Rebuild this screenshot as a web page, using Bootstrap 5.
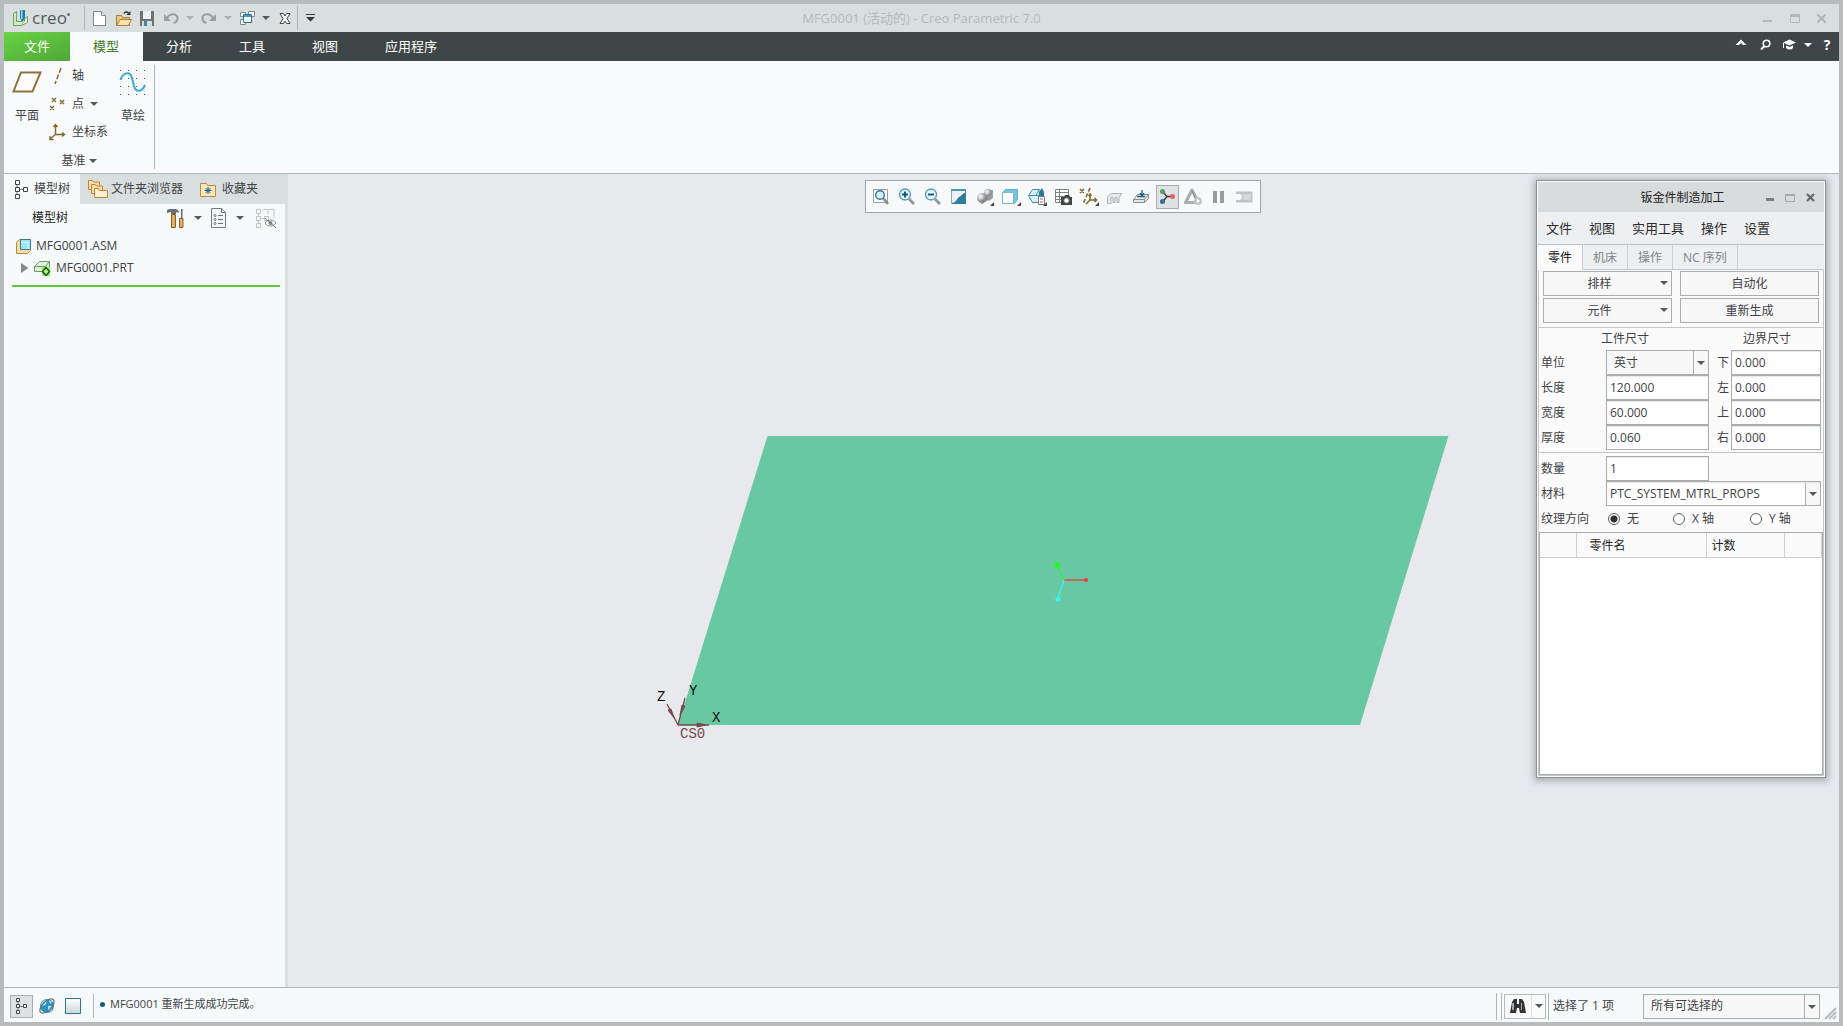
<!DOCTYPE html>
<html lang="zh-CN">
<head>
<meta charset="utf-8">
<meta name="viewport" content="width=device-width, initial-scale=1">
<title>MFG0001 (活动的) - Creo Parametric 7.0</title>
<link href="https://cdn.jsdelivr.net/npm/bootstrap@5.3.0/dist/css/bootstrap.min.css" rel="stylesheet">
<style>
:root{--frame:#b7bbbe;--bar:#d9dfdf;--dark:#3e4647;--pale:#f8fafc;--ink:#404244;--line:#b1b6b9}
body{font-family:"Open Sans","Noto Sans CJK SC",sans-serif;font-size:12px;line-height:16px;color:var(--ink);background:var(--frame)}
button,input,select{font:inherit;color:inherit}
svg{display:block;flex:none}
.app-shell{border:4px solid var(--frame)}
.ghost{border:0;background:none;padding:0;display:flex;align-items:center;justify-content:center}
.tri{width:0;height:0;border:4px solid transparent;border-top-color:#55595c;border-bottom:0;flex:none}
.tri.dim{border-top-color:#acb0b1}
.tri.light{border-top-color:#fff}
.vline{width:1px;background:#b2b6b8;flex:none}
/* title bar */
.titlebar{height:28px;background:var(--bar)}
.brand{width:80px;padding-left:8px;gap:3px}
.brand-name{font-size:17px;line-height:20px;color:#55595b}
.brand-dot{width:3px;height:3px;border-radius:50%;background:#6d7173;margin-bottom:8px}
.quick{margin-left:2px}
.tool{width:24px;height:24px}
.drop{width:14px;height:24px}
.win-title{font-size:13px;color:#b4b9bb}
.win-ctl{width:27px;height:24px}
/* menu tabs */
.menubar{height:29px;background:var(--dark);font-size:13px}
.menubar a{color:#fff;text-decoration:none;display:flex;align-items:center;padding:0 24px 2px 23px}
.menubar a.file-tab{background:linear-gradient(160deg,#66d444,#50a637);padding:0 20px 2px}
.menubar a.current{background:var(--pale);color:#3f7d22}
.help{font-size:14px}
/* ribbon */
.ribbon{height:113px;background:var(--pale);border-bottom:1px solid #b1b9b9}
.ribbon-group{width:150px;padding-top:1px}
.big{flex-direction:column;justify-content:flex-start;gap:14px;padding-top:8px}
.plane-btn{width:38px;margin-left:4px}
.sketch-btn{width:36px;gap:12px;padding-top:7px}
.cmds{width:69px;padding-left:2px}
.cmd{height:28px;justify-content:flex-start;gap:2px}
.group-name{gap:3px;margin-top:7px}
/* left panel */
.side{width:284px;background:#f7fafb;border-right:3px solid var(--bar)}
.side-tabs{height:30px;background:var(--bar)}
.side-tabs button{gap:3px}
.side-tabs .current{background:#f7fafb;width:76px;gap:6px}
.side-tabs .fav{gap:5px;margin-left:16px}
.side-tools{height:27px;padding:1px 4px 0 28px}
.side-tools .drop{width:25px}
.tree-row{height:22px;padding-left:12px;gap:5px}
.tree-row.child{padding-left:17px}
.tree-end{height:2px;background:#61c845;margin:6px 5px 0 8px}
/* viewport */
.view{background:#e8e9ed}
.scene{position:absolute;left:0;top:0}
.viewbar{margin-top:6px;margin-right:2px;height:33px;background:#f8f9fb;border:1px solid #a0a4a7;padding:0 2px}
.viewbar .ghost{width:26px;height:24px}
.viewbar .pressed{width:23px;margin:0 1px 0 2px;background:#dfe1e4;border:1px solid #a9acae}
/* dialog */
.dlg{position:absolute;right:13px;top:6px;width:290px;background:#fbfbfc;border:1px solid #8d9193;box-shadow:0 1px 7px 2px rgba(70,75,80,.4);padding:1px}
.dlg-title{height:30px;background:#d8dcdd;color:#222;padding:1px 4px 0 0}
.dlg-title .caption-text{padding-left:67px}
.dlg-title button{width:20px}
.dlg-menu{height:33px;background:#eeeff1;font-size:13px;padding-left:8px;gap:17px;border-bottom:1px solid #bcc0c3;color:#2a2c2e}
.dlg-tabs{height:25px;background:#eeeff1;border-bottom:1px solid #c3c7ca}
.dlg-tabs button{color:#808487;border-right:1px solid #ced1d4;padding:1px 10px 0}
.dlg-tabs .current{color:#111;background:#fbfbfc;height:25px}
.dlg-body{border:1px solid #c3c7ca;border-top:0}
.push{height:25px;background:#f7f7f8;border:1px solid #a9adaf;padding:0;position:relative}
.push.has-list{padding-right:16px}
.push .tri{position:absolute;right:3px;top:9px}
.push-grid{display:grid;grid-template-columns:129px 139px;gap:2px 8px;padding:1px 0 4px 4px;border-bottom:1px solid #c3c7ca}
.dims{display:grid;grid-template-columns:65px 103px 22px 90px;align-items:center;padding:0 0 2px 2px}
.dims .side-lab{padding-left:8px}
.dims.more{border-top:1px solid #c3c7ca;padding-top:3px;padding-bottom:0}
.heads{height:22px;padding:0 32px 0 62px}
.box,.pick{height:25px;border:1px solid #a9adaf;background:#fff;border-radius:0;padding:0 3px;width:100%;min-width:0;box-shadow:inset 0 1px 1px #e4e6e8}
.pick{appearance:none;padding-right:18px;background:#fff url("data:image/svg+xml,%3Csvg xmlns='http://www.w3.org/2000/svg' width='15' height='23'%3E%3Cpath d='M0 0h15v23H0z' fill='%23f7f7f8'/%3E%3Cpath d='M0 0h1v23H0z' fill='%23a9adaf'/%3E%3Cpath d='M4 10h8l-4 4z' fill='%2355595c'/%3E%3C/svg%3E") no-repeat right 0 top 0}
.pick.gray{background-color:#f7f7f8;padding-left:7px;box-shadow:none}
.pick.span-all{grid-column:2/5}
.pick.filter{width:177px;margin-left:29px}
.grain{height:26px;padding-left:2px}
.grain .lead-in{width:67px}
.grain label{padding-left:7px}
.radio{appearance:none;width:12px;height:12px;border:1px solid #5c6063;border-radius:50%;margin:0;background:#fff}
.radio:checked{background:radial-gradient(circle,#2d3033 3px,#fff 4px)}
.parts{border:1px solid #a9adaf;background:#fff;height:243px}
.parts table{table-layout:fixed;border-collapse:collapse}
.parts th{height:24px;font-weight:400;color:#1e1f20;background:#fafafb;border-right:1px solid #ccd0d2;border-bottom:1px solid #ccd0d2;padding:3px 5px 0}
.parts .part-col{padding-left:13px}
/* status bar */
.status{height:35px;background:#f7fafb;border-top:1px solid #b1b9b9;padding-top:2px}
.toggle{width:23px;height:23px;border:1px solid #a9adaf;background:#dfe1e4;margin-left:6px}
.msg{font-size:11px;gap:5px;padding:0 0 4px 6px}
.bullet{width:5px;height:5px;border-radius:50%;background:#165a7a}
.find{width:42px;height:25px;border:1px solid #b6babc;background:#fafafa}
.h24{height:24px}.h27{height:27px}
</style>
<script src="https://cdn.jsdelivr.net/npm/bootstrap@5.3.0/dist/js/bootstrap.bundle.min.js"></script>
</head>
<body>
<div class="app-shell vh-100 d-flex flex-column overflow-hidden">

<header class="titlebar d-flex align-items-center position-relative">
  <div class="brand d-flex align-items-center">
    <svg width="17" height="17" viewBox="0 0 17 17"><path d="M1.500 3.500 4.500 1.500V11.500H9.500V8.500L12.500 6.500V11.500L9.500 15.500H1.500Z" fill="#c9efb9" stroke="#6f9f68"/><path d="M9.500 15.500 15.500 12.500V6.500L12.500 8.500V11.500" fill="#e2f7da" stroke="#6f9f68"/><path d="M8 0h5v8l-2.500 4L8 8z" fill="#1c7ba5"/><path d="M9 0h1.500v9H9z" fill="#9bd7ee"/></svg>
    <span class="d-flex align-items-center"><span class="brand-name">creo</span><i class="brand-dot"></i></span>
  </div>
  <span class="vline h24"></span>
  <div class="d-flex quick">
    <button class="ghost tool" aria-label="新建"><svg width="16" height="17"><path d="M2.500 1.500h8l4 4v10h-12z" fill="#fff" stroke="#85898b"/><path d="M10.500 1.500v4h4" fill="#e6eaec" stroke="#85898b"/></svg></button>
    <button class="ghost tool" aria-label="打开"><svg width="17" height="17"><path d="M1.500 15.500v-10h5l1 2h7v8z" fill="#eec77b" stroke="#a87b38"/><path d="M1.500 15.500 5 9.500h11.500l-3 6z" fill="#fce1ad" stroke="#a87b38"/><path d="M9 3.500c1-2 3-2 4.500-.5" fill="none" stroke="#333" stroke-width="1.600"/><path d="M11.500 5h4V1z" fill="#333"/></svg></button>
    <button class="ghost tool" aria-label="保存"><svg width="16" height="17"><path d="M1 1h14v15H1z" fill="#6d7275"/><path d="M4 1h8v8H4z" fill="#eef1f2"/><path d="M3 11h10v5H3z" fill="#d7dcde"/><path d="M5 11h3v5H5z" fill="#3a87a6"/></svg></button>
    <button class="ghost tool" aria-label="撤消"><svg width="16" height="14"><path d="M1 3v7h7z" fill="#9b9fa1"/><path d="M4 7C7 2 14 2 14.500 7c0 3-2 4.500-4 5" fill="none" stroke="#9b9fa1" stroke-width="2.200"/></svg></button>
    <button class="ghost drop" aria-label="撤消列表"><i class="tri dim"></i></button>
    <button class="ghost tool" aria-label="重做"><svg width="16" height="14"><path d="M15 3v7H8z" fill="#9b9fa1"/><path d="M12 7C9 2 2 2 1.500 7c0 3 2 4.500 4 5" fill="none" stroke="#9b9fa1" stroke-width="2.200"/></svg></button>
    <button class="ghost drop" aria-label="重做列表"><i class="tri dim"></i></button>
    <button class="ghost tool" aria-label="窗口"><svg width="16" height="16"><g fill="#fff" stroke="#80868a"><path d="M1.500 2.500h5v4h-5zM9.500 1.500h6v5h-6zM1.500 9.500h5v5h-5z"/><path d="M4.500 4.500h8v8h-8z" stroke="#2b7391"/></g><path d="M5 5h7v2H5z" fill="#38a3c8"/></svg></button>
    <button class="ghost drop" aria-label="窗口列表"><i class="tri"></i></button>
    <button class="ghost tool" aria-label="关闭窗口"><svg width="12" height="11"><path d="M1 .500h3.500L6 3 7.500.500H11L8 5.500l3 5H7.500L6 8l-1.500 2.500H1l3-5z" fill="#fff" stroke="#424648"/></svg></button>
  </div>
  <span class="vline h24"></span>
  <button class="ghost tool" aria-label="自定义快速访问工具栏"><svg width="9" height="8"><path d="M0 0h9v1H0zM0 3h9L4.500 7.500z" fill="#35393b"/></svg></button>
  <div class="win-title position-absolute start-50 translate-middle-x">MFG0001 (活动的) - Creo Parametric 7.0</div>
  <div class="ms-auto d-flex pe-1">
    <button class="ghost win-ctl" aria-label="最小化"><svg width="9" height="10"><path d="M0 7h9v2H0z" fill="#b3b7b9"/></svg></button>
    <button class="ghost win-ctl" aria-label="最大化"><svg width="10" height="9"><path d="M.500 1h9v7.500h-9z" fill="none" stroke="#b3b7b9"/><path d="M0 0h10v3H0z" fill="#b3b7b9"/></svg></button>
    <button class="ghost win-ctl" aria-label="关闭"><svg width="9" height="9"><path d="m.500.500 8 8m0-8-8 8" stroke="#aeb2b4" stroke-width="2"/></svg></button>
  </div>
</header>

<nav class="menubar d-flex">
  <a class="file-tab" href="#">文件</a><a class="current" href="#">模型</a><a href="#">分析</a><a href="#">工具</a><a href="#">视图</a><a href="#">应用程序</a>
  <div class="ms-auto d-flex align-items-center pb-1">
    <button class="ghost tool pb-1" aria-label="最小化功能区"><svg width="12" height="7"><path d="m.500 6L6 .500 11.500 6H8L6 4 4 6z" fill="#fff"/></svg></button>
    <button class="ghost tool" aria-label="搜索"><svg width="11" height="11"><circle cx="6.500" cy="4.500" r="3.300" fill="none" stroke="#fff" stroke-width="1.600"/><path d="M4.500 7 1 10.500" stroke="#fff" stroke-width="2"/></svg></button>
    <button class="ghost tool" aria-label="学习"><svg width="13" height="11"><path d="m0 3.500 6.500-3 6.500 3-6.500 3z" fill="#fff"/><path d="M3 6.500v2.500q3.500 3 7 0V6.500L6.500 8zM0 4h1v5H0z" fill="#fff"/></svg></button>
    <button class="ghost drop" aria-label="学习列表"><i class="tri light"></i></button>
    <button class="ghost tool help text-white fw-bold" aria-label="帮助">?</button>
  </div>
</nav>

<section class="ribbon d-flex">
  <div class="ribbon-group d-flex flex-column">
    <div class="d-flex">
      <button class="ghost big plane-btn"><svg width="30" height="24"><path d="M9 2.500h19.500L20.500 21.500H1.500z" fill="#fdfcfa" stroke="#8d733d" stroke-width="2"/></svg>平面</button>
      <div class="cmds">
        <button class="ghost cmd"><svg width="18" height="18"><path d="m13 1-6 16" stroke="#84692f" stroke-width="1.500" stroke-dasharray="5 2"/></svg><span class="ps-1">轴</span></button>
        <button class="ghost cmd"><svg width="18" height="16"><path d="m4 2 4 4m0-4-4 4m8-2 4 4m0-4-4 4M2 10l4 4m0-4-4 4" stroke="#84692f" stroke-width="1.400"/></svg><span class="ps-1">点</span><i class="tri ms-1"></i></button>
        <button class="ghost cmd"><svg width="18" height="18"><path d="M7.500 2v9.500H16M7.500 11.500 2 16M5.500 4l2-2.500 2 2.500M14 9.500l2.500 2-2.500 2M2 13v3.500h3.500" fill="none" stroke="#84692f" stroke-width="1.400"/></svg><span class="ps-1 text-nowrap">坐标系</span></button>
      </div>
      <button class="ghost big sketch-btn"><svg width="28" height="27"><g fill="#4c5052"><path d="M1 1h1v1H1zM9 1h1v1H9zM17 1h1v1h-1zM25 1h1v1h-1zM1 9h1v1H1zM9 9h1v1H9zM17 9h1v1h-1zM25 9h1v1h-1zM1 17h1v1H1zM9 17h1v1H9zM17 17h1v1h-1zM25 17h1v1h-1zM1 25h1v1H1zM9 25h1v1H9zM17 25h1v1h-1zM25 25h1v1h-1z"/></g><path d="M1.500 11C4 3 11 2 13 9l2 8c2 7 8 6 11-1" fill="none" stroke="#3ba7d6" stroke-width="2"/></svg>草绘</button>
    </div>
    <button class="ghost group-name mx-auto">基准<i class="tri"></i></button>
  </div>
  <span class="vline my-1"></span>
</section>

<main class="d-flex flex-grow-1" style="min-height:0">
  <aside class="side flex-shrink-0">
    <div class="side-tabs d-flex">
      <button class="ghost current"><svg width="14" height="19"><g fill="#fff" stroke="#404446"><path d="M3 5v9M3 9.500h7" stroke="#777"/><path d="M1.500.500h4v4h-4zM1.500 7.500h4v4h-4zM1.500 14.500h4v4h-4zM9.500 7.500h4v4h-4z"/></g></svg>模型树</button>
      <button class="ghost ms-2"><svg width="20" height="20"><g stroke="#b9843b" fill="#fbdda4"><path d="M.500 10.500v-9h4l1 1.500h6v7.500z"/><path d="M3.500 14.500v-9h4l1 1.500h6v7.500z"/><path d="M6.500 18.500v-9h4l1 2h8v7z" fill="#fff0cf"/></g></svg>文件夹浏览器</button>
      <button class="ghost fav"><svg width="18" height="17"><path d="M1.500 15.500V2.500h6l1 2h8v11z" fill="#fce7bd" stroke="#b58a49"/><path d="M9 6v7M5.500 9.500h7M6.500 7l5 5m0-5-5 5" stroke="#116181"/></svg>收藏夹</button>
    </div>
    <div class="side-tools d-flex align-items-center">
      <span class="me-auto text-dark">模型树</span>
      <button class="ghost" aria-label="设置"><svg width="18" height="21"><path d="M4.500 6.500h4v13h-4z" fill="#e5b063" stroke="#88602b"/><path d="M0 5V2l2-1h7q3 1 3 4l-3-1v2H4V4z" fill="#6a6e71"/><path d="M14 1h1.500v10H14z" fill="#5f6a70"/><path d="M12.500 10.500h3.500v9h-3.500z" fill="#e5b063" stroke="#88602b"/></svg></button>
      <button class="ghost drop" aria-label="设置列表"><i class="tri"></i></button>
      <button class="ghost" aria-label="显示"><svg width="17" height="21"><path d="M1.500.500h10l4 4v15h-14z" fill="#f4f7f8" stroke="#727b80"/><path d="M11.500.500v4h4M8 7.500h5M8 11.500h5M8 15.500h5" fill="none" stroke="#67727a"/><g fill="#fff" stroke="#67727a"><circle cx="5" cy="7.500" r="1"/><circle cx="5" cy="11.500" r="1"/><circle cx="5" cy="15.500" r="1"/></g></svg></button>
      <button class="ghost drop" aria-label="显示列表"><i class="tri"></i></button>
      <button class="ghost ms-1 me-1" aria-label="隐藏项"><svg width="21" height="20"><g fill="none" stroke="#bfc3c5"><path d="M.500 1.500h4v4h-4zM.500 8.500h4v4h-4zM.500 15.500h4v4h-4zM8.500 8.500h4v4h-4zM4 10.500h4M7 1.500h5v5M13 1.500h5v9M2.500 5v3M2.500 12v3"/><path d="M9 15c3-4 8-4 11 0-3 4-8 4-11 0z" stroke="#8c9092"/></g><circle cx="14.500" cy="15" r="2" fill="#85898b"/><path d="m9 10 11 10" stroke="#777"/></svg></button>
    </div>
    <div class="tree-row d-flex align-items-center mt-1">
      <svg width="15" height="15"><path d="M.500 3.500l3-3h11v11l-3 3H.500z" fill="#f9dda2" stroke="#b08848"/><path d="M4.500.500h10v9l-1 1h-9z" fill="#9ee1f8" stroke="#3a7894"/><path d="M5 3.500h7V10" fill="none" stroke="#d9f5fd"/></svg>MFG0001.ASM</div>
    <div class="tree-row child d-flex align-items-center">
      <svg width="8" height="10"><path d="m0 0 7.500 5L0 10z" fill="#85898b"/></svg>
      <svg width="17" height="16"><path d="M.500 6.500l5-5h10v6l-4 4H.500z" fill="#ddf5d6" stroke="#739570"/><path d="M.500 6.500h11v5M11.500 6.500l4-5" fill="none" stroke="#739570"/><path d="M8 7h8v9H8z" fill="#88f05b"/><path d="M12 7.500 15.500 11.500 12 15.500 8.500 11.500z" fill="#a8ff70" stroke="#2f4e28" stroke-width="1.500"/></svg>MFG0001.PRT</div>
    <div class="tree-end"></div>
  </aside>

  <section class="view flex-grow-1 position-relative overflow-hidden d-flex flex-column align-items-center">
    <svg class="scene" width="1551" height="813">
      <path d="M479.500 262H1160.500L1072 551H390z" fill="#69c8a4"/>
      <g stroke="#76494d" fill="#76494d"><path d="M390 551 379 530M390 551 397 524M390 551h31" fill="none" stroke-width="1.300"/><path d="m380 536 3-1 3 9zM392 541l2-10 3 1zM409 549l9 2-9 2z"/></g>
      <path d="m776 406-7-14" stroke="#2cf42c" stroke-width="1.300"/><path d="M776 406h22" stroke="#f43636" stroke-width="1.300"/><path d="m776 406-6 18" stroke="#36f6f6" stroke-width="1.300"/>
      <circle cx="769" cy="391" r="3" fill="#2cf42c"/><circle cx="798" cy="406" r="2" fill="#f43636"/><circle cx="770" cy="425" r="2.500" fill="#36f6f6"/>
      <g font-family="Liberation Mono,monospace" font-size="14"><text x="369" y="527" fill="#111">Z</text><text x="401" y="521" fill="#111">Y</text><text x="424" y="548" fill="#111">X</text><text x="392" y="564" fill="#76494d">CS0</text></g>
    </svg>
    <div class="viewbar d-flex align-items-center position-relative">
      <button class="ghost" aria-label="重新调整"><svg width="17" height="17"><path d="M1.500 1.500h14v13h-14z" fill="#fafbfc" stroke="#9b9fa1"/><circle cx="8" cy="7" r="4.300" fill="#d8eff8" stroke="#2a7b9f" stroke-width="1.400"/><path d="m11 10 5 6" stroke="#85898b" stroke-width="2.500"/></svg></button>
      <button class="ghost" aria-label="放大"><svg width="17" height="17"><circle cx="7" cy="6.500" r="5.500" fill="#e5f5fa" stroke="#4d9aba" stroke-width="1.300"/><path d="M4 6.500h6M7 3.500v6" stroke="#165e7e" stroke-width="2"/><path d="m11 11 5 5" stroke="#94989a" stroke-width="3"/></svg></button>
      <button class="ghost" aria-label="缩小"><svg width="17" height="17"><circle cx="7" cy="6.500" r="5.500" fill="#e5f5fa" stroke="#4d9aba" stroke-width="1.300"/><path d="M4 6.500h6" stroke="#165e7e" stroke-width="2"/><path d="m11 11 5 5" stroke="#94989a" stroke-width="3"/></svg></button>
      <button class="ghost" aria-label="重画"><svg width="17" height="17"><path d="M1.500 1.500h14v14h-14z" fill="#eef3f5" stroke="#8aa9b5"/><path d="M2 15C8 13 5 9 9 8s4-4 7-5v13H2z" fill="#2e7e9d"/><path d="M1 1h15v2H1z" fill="#4b9ab8"/><path d="M3 14C7 13 6 9 9 8s3-4 6-4" fill="none" stroke="#fff" stroke-width="1.500"/></svg></button>
      <button class="ghost" aria-label="渲染"><svg width="20" height="18"><defs><radialGradient id="ball" cx=".35" cy=".35"><stop stop-color="#fff"/><stop offset="1" stop-color="#8f9395"/></radialGradient></defs><path d="M10 2h8v8l-4 3-4-2z" fill="#9fa3a5"/><circle cx="13" cy="5" r="4" fill="url(#ball)"/><circle cx="7" cy="10" r="5" fill="url(#ball)"/><path d="m6 15 7-5" stroke="#868a8d" stroke-width="3"/><path d="M19 14v4h-4z" fill="#444"/></svg></button>
      <button class="ghost" aria-label="显示样式"><svg width="20" height="18"><path d="M1.500 4.500 4.500 1.500h12v10l-3 4h-12z" fill="#75c5df" stroke="#5eb2d0"/><path d="M1.500 4.500h11v11h-11z" fill="#fff" stroke="#75b9d2"/><path d="M20 14v4h-4z" fill="#444"/></svg></button>
      <button class="ghost" aria-label="已保存方向"><svg width="20" height="18"><path d="m1.500 7.500 4-6h7l4 5v5l-4 3h-7z" fill="#d4eff8" stroke="#438fab"/><path d="M2 7.500h11M12 2 9 7.500" fill="none" stroke="#438fab"/><path d="M12 8V4l3-4 2 4v5z" fill="#2c7898"/><path d="M11.500 8.500h6v8h-6z" fill="#fff" stroke="#777"/><path d="M13 11h3M13 14h3" stroke="#777"/><path d="M20 14v4h-4z" fill="#444"/></svg></button>
      <button class="ghost" aria-label="视图管理器"><svg width="18" height="18"><path d="M1.500 1.500h13v13h-13zM1 4.500h13M1 8.500h13M1 11.500h13M5.500 1v13" fill="#fff" stroke="#7d8183"/><path d="M7 9h3l1-2h4l1 2h2v8H7z" fill="#404446"/><circle cx="12.500" cy="12.500" r="2.500" fill="#fff" stroke="#929698"/></svg></button>
      <button class="ghost" aria-label="基准显示过滤器"><svg width="20" height="18"><g fill="none" stroke="#84692f" stroke-width="1.600"><path d="m1 1 4 4m0-4-4 4M11 6.500V12h7M11 12l-4 4M15.500 10l2 2-2 2M9.500 8l1.500-2 1.500 2"/><path d="M11 0 4 16" stroke-dasharray="4 2"/></g><path d="M20 14v4h-4z" fill="#444"/></svg></button>
      <button class="ghost" aria-label="注释显示"><svg width="17" height="16"><g fill="#e8eaeb" stroke="#adb1b3"><path d="M1.500 8.500 5 4.500h11l-3 4v5h-2v-5H9v5H7v-5H5v6H1.500z"/></g></svg></button>
      <button class="ghost" aria-label="剖面"><svg width="18" height="17"><path d="m1.500 11.500 4-5h11l-4 5zM1.500 11.500v3h11v-3M12.500 14.500l4-4v-4" fill="#e2e7e9" stroke="#8a8f92"/><path d="M5 8.500h8M10 2v5M8 5l2 3 2-3" fill="none" stroke="#21627e" stroke-width="1.300"/></svg></button>
      <button class="ghost pressed" aria-label="旋转中心"><svg width="17" height="17"><path d="M3.500 3.500 8 8.500 3.500 14M8 8.500h6" fill="none" stroke="#333" stroke-width="1.400"/><circle cx="3.500" cy="3.500" r="2.500" fill="#5a9b5e"/><circle cx="3.500" cy="13.500" r="2.500" fill="#2f7195"/><circle cx="13.500" cy="8.500" r="2.500" fill="#e16262"/></svg></button>
      <button class="ghost" aria-label="仿真"><svg width="18" height="18"><path d="M8 2 1.500 14.500h13z" fill="none" stroke="#a9adaf" stroke-width="3" stroke-linejoin="round"/><path d="m8 3 5 11" stroke="#85898b"/><circle cx="14" cy="13" r="4" fill="#c4c7c9"/><path d="m13 11 3 2-3 2z" fill="#fff"/></svg></button>
      <button class="ghost" aria-label="暂停"><svg width="12" height="12"><path d="M0 0h4v12H0zM7 0h4v12H7z" fill="#999d9f"/></svg></button>
      <button class="ghost" aria-label="继续"><svg width="17" height="12"><path d="M0 .500h16.500v11H0V9h4c3-2 3-4 0-6H0z" fill="#c0c3c5"/><path d="M6 3h9v6H7c1-2 1-4-1-6z" fill="#d5d7d9"/></svg></button>
    </div>

    <form class="dlg" onsubmit="return false">
      <div class="dlg-title d-flex align-items-center"><span class="caption-text flex-grow-1 text-center">钣金件制造加工</span>
        <button class="ghost" aria-label="最小化对话框"><svg width="8" height="7"><path d="M0 4h8v3H0z" fill="#797d80"/></svg></button>
        <button class="ghost" aria-label="最大化对话框"><svg width="10" height="8"><path d="M.500.500h9v7h-9z" fill="none" stroke="#a4a8aa"/><path d="M0 0h10v2H0z" fill="#a4a8aa"/></svg></button>
        <button class="ghost" aria-label="关闭对话框"><svg width="9" height="9"><path d="m1 1 7 7m0-7L1 8" stroke="#64686b" stroke-width="2.300"/></svg></button>
      </div>
      <div class="dlg-menu d-flex"><button class="ghost">文件</button><button class="ghost">视图</button><button class="ghost">实用工具</button><button class="ghost">操作</button><button class="ghost">设置</button></div>
      <div class="dlg-tabs d-flex"><button class="ghost current">零件</button><button class="ghost">机床</button><button class="ghost">操作</button><button class="ghost">NC 序列</button></div>
      <div class="dlg-body">
        <div class="push-grid">
          <button class="push has-list">排样<i class="tri"></i></button><button class="push">自动化</button>
          <button class="push has-list">元件<i class="tri"></i></button><button class="push">重新生成</button>
        </div>
        <div class="heads d-flex align-items-center justify-content-between"><span>工件尺寸</span><span>边界尺寸</span></div>
        <div class="dims">
          <label for="unit">单位</label><select id="unit" class="pick gray"><option>英寸</option></select><label class="side-lab" for="b1">下</label><input id="b1" class="box" value="0.000">
          <label for="len">长度</label><input id="len" class="box" value="120.000"><label class="side-lab" for="b2">左</label><input id="b2" class="box" value="0.000">
          <label for="wid">宽度</label><input id="wid" class="box" value="60.000"><label class="side-lab" for="b3">上</label><input id="b3" class="box" value="0.000">
          <label for="thk">厚度</label><input id="thk" class="box" value="0.060"><label class="side-lab" for="b4">右</label><input id="b4" class="box" value="0.000">
        </div>
        <div class="dims more">
          <label for="qty">数量</label><input id="qty" class="box" value="1"><span></span><span></span>
          <label for="mat">材料</label><select id="mat" class="pick span-all"><option>PTC_SYSTEM_MTRL_PROPS</option></select>
        </div>
        <div class="grain d-flex align-items-center">
          <span class="lead-in">纹理方向</span>
          <input class="radio" type="radio" name="grain" id="g0" checked><label for="g0" style="width:53px">无</label>
          <input class="radio" type="radio" name="grain" id="g1"><label for="g1" style="width:65px">X 轴</label>
          <input class="radio" type="radio" name="grain" id="g2"><label for="g2">Y 轴</label>
        </div>
        <div class="parts"><table class="w-100"><colgroup><col style="width:36px"><col style="width:130px"><col style="width:78px"><col></colgroup><thead><tr><th></th><th class="part-col">零件名</th><th>计数</th><th></th></tr></thead></table></div>
      </div>
    </form>
  </section>
</main>

<footer class="status d-flex align-items-center">
  <button class="ghost toggle" aria-label="模型树开关"><svg width="13" height="17"><g fill="#fff" stroke="#404446"><path d="M3 4v9M3 8.500h7" stroke="#777"/><path d="M1.500.500h3v3h-3zM1.500 6.500h3v3h-3zM1.500 12.500h3v3h-3zM8.500 6.500h3v3h-3z"/></g></svg></button>
  <button class="ghost" style="width:28px" aria-label="浏览器开关"><svg width="18" height="18"><circle cx="9" cy="9" r="7" fill="#2b91bf"/><path d="M5 4c3-2 4 1 3 3S4 9 3 7zM10 9c3-1 5 0 4 3s-4 3-4 0zM11 3l3 2-2 2z" fill="#a6e1f5"/><ellipse cx="9" cy="9" rx="9" ry="4.500" transform="rotate(-45 9 9)" fill="none" stroke="#6a7073" stroke-width="1.300"/></svg></button>
  <button class="ghost" style="width:24px" aria-label="全屏"><svg width="16" height="16"><defs><linearGradient id="sq" x2="0" y2="1"><stop stop-color="#fff"/><stop offset="1" stop-color="#ccd7dc"/></linearGradient></defs><path d="M.500.500h15v15H.500z" fill="url(#sq)" stroke="#2d748f"/></svg></button>
  <span class="vline ms-2 h24"></span>
  <div class="msg d-flex align-items-center"><span class="bullet"></span><span>MFG0001 重新生成成功完成。</span></div>
  <div class="ms-auto d-flex align-items-center">
    <span class="vline me-1 h27"></span><span class="vline h27" style="margin-right:2px"></span>
    <div class="find d-flex"><button class="ghost" style="width:27px" aria-label="查找"><svg width="18" height="16"><path d="M3 4 5 1h3v5h2V1h3l2 3 2 11h-6l-1-5H8l-1 5H1z" fill="#303436"/><path d="M3 5h2v7H3zM12 5h1v7h-1z" fill="#a1a5a7"/></svg></button><button class="ghost border-start" style="width:14px" aria-label="查找列表"><i class="tri"></i></button></div>
    <span class="vline h27" style="margin:0 4px 0 2px"></span>
    <span>选择了 1 项</span>
    <select class="pick gray filter" aria-label="选择过滤器"><option>所有可选择的</option></select>
    <svg class="align-self-end ms-1" width="15" height="13"><path d="M1 12 12 1M5 12l7-7M9 12l3-3" stroke="#b6babc" stroke-width="2"/></svg>
  </div>
</footer>
</div>
</body>
</html>
